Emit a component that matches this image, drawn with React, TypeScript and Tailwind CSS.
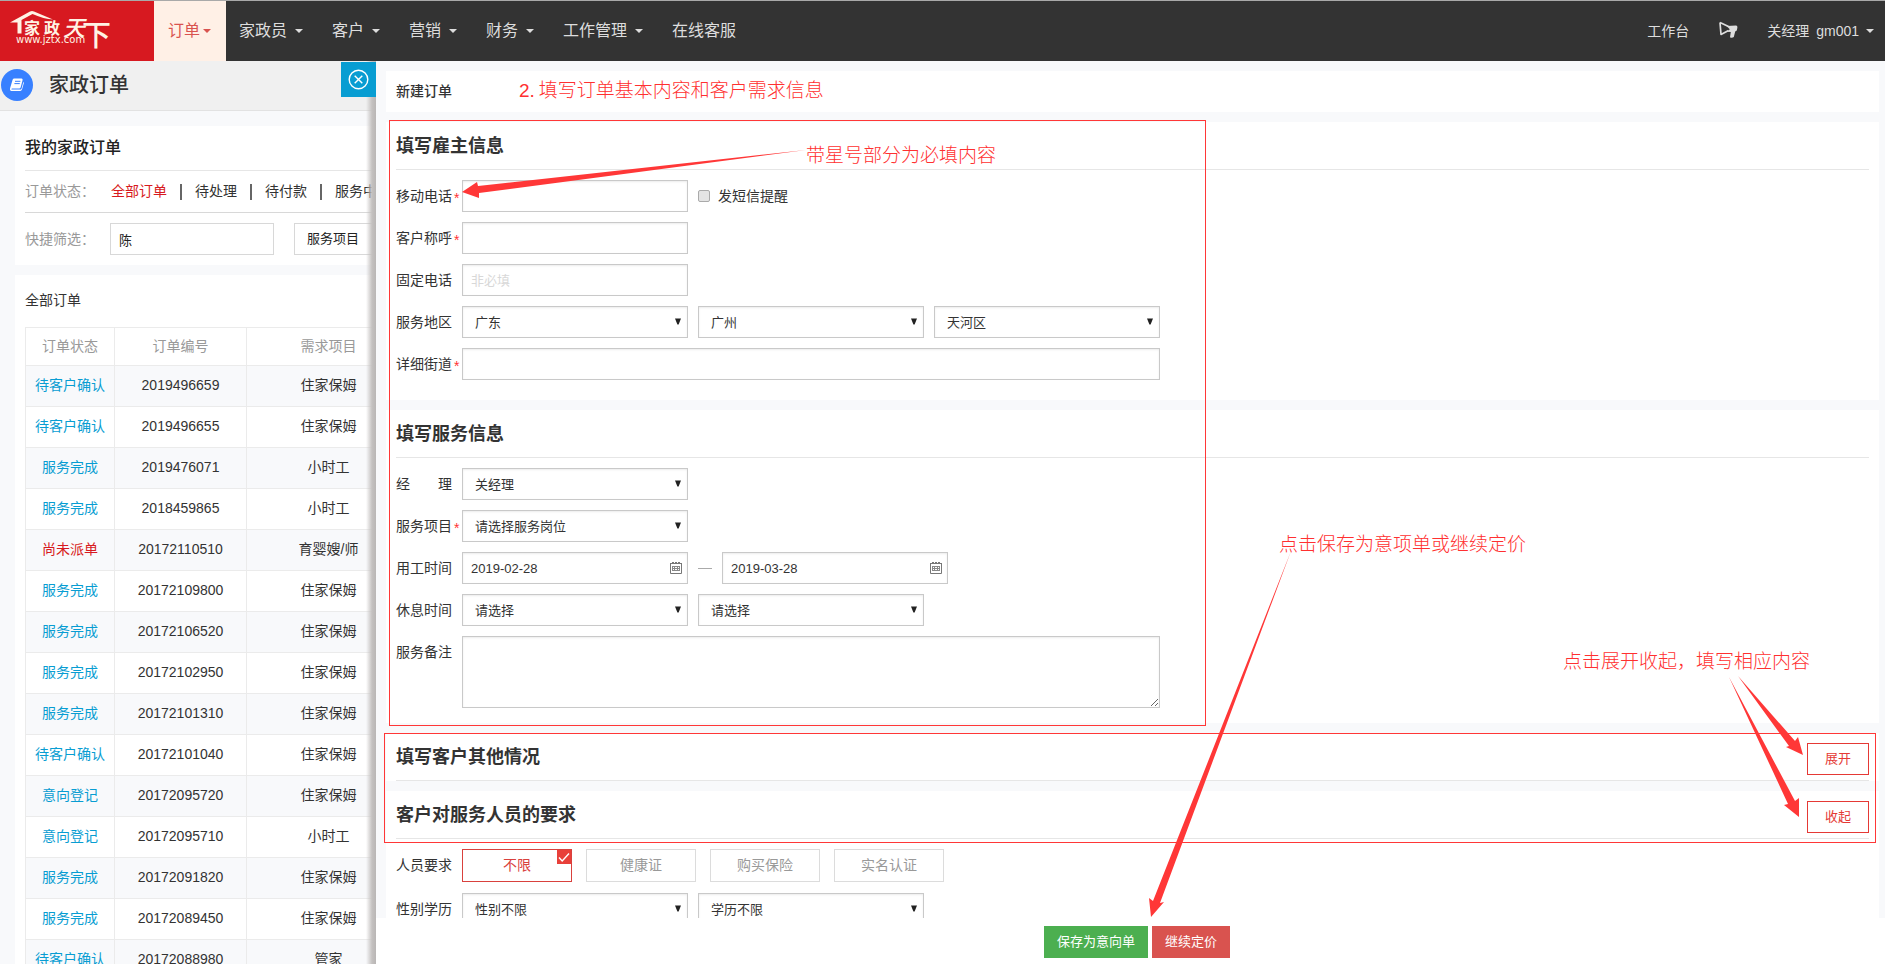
import type { ReactNode } from 'react';

const fieldBase =
  'border border-[#c9c9c9] bg-white text-[13px] text-[#333] shadow-[inset_0_1px_2px_rgba(0,0,0,0.08)] outline-none';

function Caret({ className = '' }: { className?: string }) {
  return (
    <svg className={className} width="8" height="4" viewBox="0 0 8 4" fill="currentColor" aria-hidden="true">
      <path d="M0 0h8L4 4z" />
    </svg>
  );
}

function Logo() {
  return (
    <a href="#home" aria-label="家政天下" className="block h-full w-[154px] shrink-0 bg-[#d71920]">
      <svg width="120" height="60" viewBox="0 0 120 60" fill="#fff3e4" fontFamily='"Noto Sans CJK SC", sans-serif'>
        <path d="M10 21.5 L30 10.5 Q32 9.6 34 10.5 L53 18.5 Q44 18 32.5 13 L21.5 19 L21.5 32.5 L17.5 32.5 L17.5 21.5 Z" />
        <text x="24" y="33" fontSize="16" fontWeight="700">家</text>
        <text x="44" y="33" fontSize="16" fontWeight="700">政</text>
        <text x="63" y="35" fontSize="22" fontWeight="500" fontStyle="italic">天</text>
        <text x="82" y="45" fontSize="29" fontWeight="500">下</text>
        <text x="16" y="42" fontSize="10" fontFamily='"DejaVu Sans", sans-serif'>www.jztx.com</text>
      </svg>
    </a>
  );
}

const navItems = [
  { label: '家政员', menu: true },
  { label: '客户', menu: true },
  { label: '营销', menu: true },
  { label: '财务', menu: true },
  { label: '工作管理', menu: true },
  { label: '在线客服', menu: false },
];

function TopBar() {
  return (
    <header className="relative z-30 flex h-[61px] shrink-0 border-t border-[#a9a9a9] bg-[#333] text-[#ddd]">
      <Logo />
      <nav className="flex text-[16px] whitespace-nowrap">
        <a href="#orders" className="flex w-[72px] items-center gap-[3px] bg-[#fff0e6] pl-[14px] text-[#d9534f]">
          订单
          <Caret />
        </a>
        {navItems.map((item) => (
          <a key={item.label} href={`#${item.label}`} className="flex items-center gap-2 pr-4 pl-[13px]">
            {item.label}
            {item.menu && <Caret />}
          </a>
        ))}
      </nav>
      <div className="ml-auto flex items-center pr-[11px] text-[14px] whitespace-nowrap">
        <a href="#workbench">工作台</a>
        <button type="button" aria-label="公告" className="mx-[29px] block pb-[2px]">
          <svg width="20" height="18" viewBox="0 0 20 18" aria-hidden="true">
            <path d="M2 1.5 L3 13.5 L10.5 9.5 M2 1.5 L10.5 5.5" fill="none" stroke="#ddd" strokeWidth="1.7" strokeLinejoin="round" />
            <path
              d="M8.5 5 L18 4.6 Q19.6 4.6 19.4 6.6 L18.8 9.4 L17.2 10.4 L15.8 16 Q14 17.3 12 16.2 L12.8 11 L9 10.8 L11.8 8.2 Z"
              fill="#ddd"
            />
          </svg>
        </button>
        <button type="button" className="flex items-center gap-[7px]">
          <span>关经理</span>
          <span>gm001</span>
          <Caret />
        </button>
      </div>
    </header>
  );
}

const orders: [string, string, string][] = [
  ['待客户确认', '2019496659', '住家保姆'],
  ['待客户确认', '2019496655', '住家保姆'],
  ['服务完成', '2019476071', '小时工'],
  ['服务完成', '2018459865', '小时工'],
  ['尚未派单', '20172110510', '育婴嫂/师'],
  ['服务完成', '20172109800', '住家保姆'],
  ['服务完成', '20172106520', '住家保姆'],
  ['服务完成', '20172102950', '住家保姆'],
  ['服务完成', '20172101310', '住家保姆'],
  ['待客户确认', '20172101040', '住家保姆'],
  ['意向登记', '20172095720', '住家保姆'],
  ['意向登记', '20172095710', '小时工'],
  ['服务完成', '20172091820', '住家保姆'],
  ['服务完成', '20172089450', '住家保姆'],
  ['待客户确认', '20172088980', '管家'],
];

function StatusDivider() {
  return <span className="h-4 w-[2px] bg-[#666]" />;
}

function OrdersPane() {
  return (
    <section className="relative w-[376px] shrink-0 overflow-hidden bg-[#f8f9fb]">
      <div className="flex h-[50px] items-center border-b border-[#e2e2e2] bg-[#f0f0f0] pb-px pl-px">
        <span className="flex size-8 items-center justify-center rounded-full bg-[#3880ff]">
          <svg width="16" height="14" viewBox="0 0 16 14" aria-hidden="true">
            <path
              d="M5.2 0.5 H12.6 Q13.9 0.6 13.6 2 L11.6 9.4 Q11.3 10.4 10.2 10.4 H3 Q2 10.8 2.6 11.6 H11.2 Q12.2 11.6 12.6 10.4 L14.4 3.8 Q15 4.4 14.8 5.2 L13 11.6 Q12.5 13 11.2 13 H2.4 Q0.4 12.7 1 10.4 L3.6 1.8 Q4.1 0.6 5.2 0.5 Z"
              fill="#fff"
            />
            <path d="M6 3.3 H11.4 M5.4 5.6 H10.8" stroke="#3880ff" strokeWidth="1" />
          </svg>
        </span>
        <h1 className="ml-4 text-[20px] leading-[28px] font-medium text-[#333]">家政订单</h1>
      </div>
      <div className="min-w-[480px] pt-[15px] pl-[15px]">
        <div className="bg-white pl-[10px]">
          <h2 className="flex h-[45px] items-center border-b border-[#e6e6e6] text-[16px] font-medium text-[#222]">
            我的家政订单
          </h2>
          <div className="flex h-[42px] items-center border-b border-[#d8d8d8] text-[14px] whitespace-nowrap text-[#333]">
            <span className="w-[86px] text-[#999]">订单状态：</span>
            <div className="flex items-center gap-[13px]">
              <a href="#all" className="text-[#d71920]">全部订单</a>
              <StatusDivider />
              <a href="#pending">待处理</a>
              <StatusDivider />
              <a href="#unpaid">待付款</a>
              <StatusDivider />
              <a href="#serving">服务中</a>
            </div>
          </div>
          <div className="flex items-center py-[10px]">
            <label htmlFor="quick" className="w-[85px] text-[14px] text-[#999]">快捷筛选：</label>
            <input id="quick" defaultValue="陈" className="h-8 w-[164px] border border-[#d8d8d8] bg-white px-2 text-[13px] text-[#222] outline-none" />
            <button type="button" className="ml-5 h-8 w-[120px] border border-[#d8d8d8] bg-white pl-3 text-left text-[13px] text-[#222]">
              服务项目
            </button>
          </div>
        </div>
        <div className="mt-[10px] bg-white pl-[10px]">
          <h3 className="flex h-[52px] items-center pb-[2px] text-[14px] text-[#333]">全部订单</h3>
          <table className="w-[385px] table-fixed border-collapse text-center text-[14px] text-[#333]">
            <colgroup>
              <col className="w-[89px]" />
              <col className="w-[132px]" />
              <col className="w-[164px]" />
            </colgroup>
            <thead>
              <tr className="h-[38px] text-[#999]">
                {['订单状态', '订单编号', '需求项目'].map((heading) => (
                  <th key={heading} scope="col" className="border border-[#ebebeb] font-normal">{heading}</th>
                ))}
              </tr>
            </thead>
            <tbody>
              {orders.map(([status, id, service]) => (
                <tr key={id} className="h-[41px] odd:bg-[#f8f9fb]">
                  <td className="border border-[#ebebeb] pb-[2px]">
                    <a href={`#${id}`} className={status === '尚未派单' ? 'text-[#d71920]' : 'text-[#089dd2]'}>{status}</a>
                  </td>
                  <td className="border border-[#ebebeb] pb-[2px]">{id}</td>
                  <td className="border border-[#ebebeb] pb-[2px]">{service}</td>
                </tr>
              ))}
            </tbody>
          </table>
        </div>
      </div>
      <div className="pointer-events-none absolute inset-y-0 right-0 w-[10px] bg-linear-to-r from-transparent via-[#c4c1c0] via-60% to-[#b9b6b5]" />
    </section>
  );
}

function FormRow({ label, htmlFor, required, children }: { label: string; htmlFor: string; required?: boolean; children: ReactNode }) {
  return (
    <div className="flex items-start">
      <label htmlFor={htmlFor} className="flex h-8 w-[66px] shrink-0 items-center text-[14px] whitespace-pre text-[#333]">
        {label}
        {required && <span className="pt-1 pl-[2px] text-[#f33]">*</span>}
      </label>
      <div className="flex items-center gap-[10px]">{children}</div>
    </div>
  );
}

function SelectBox({ id, value, label }: { id: string; value: string; label: string }) {
  return (
    <div className="relative w-[226px]">
      <select id={id} aria-label={label} defaultValue={value} className={`${fieldBase} block h-8 w-full appearance-none pt-[2px] pl-3`}>
        <option>{value}</option>
      </select>
      <svg className="pointer-events-none absolute top-3 right-[7px]" width="6" height="7" viewBox="0 0 6 7" aria-hidden="true">
        <path d="M0 0.5h6L3.6 6.5H2.4z" fill="#222" />
      </svg>
    </div>
  );
}

function DateBox({ id, value, label }: { id: string; value: string; label: string }) {
  return (
    <div className="relative w-[226px]">
      <input id={id} aria-label={label} defaultValue={value} className={`${fieldBase} block h-8 w-full px-2`} />
      <svg className="pointer-events-none absolute top-[10px] right-[6px]" width="12" height="12" viewBox="0 0 12 12" aria-hidden="true">
        <path d="M0.5 1V11.5H11.5V1M2 0.5H4M5 0.5H7M8 0.5H10M1 1.5H11" fill="none" stroke="#777" />
        <path d="M2 4.5H10M2 6.5H10M2 8.5H10M2.5 4V9M4.5 4V9M7.5 4V9M9.5 4V9" stroke="#888" fill="none" />
      </svg>
    </div>
  );
}

function FormCard({ title, action, children, className = '' }: { title: string; action?: string; children?: ReactNode; className?: string }) {
  return (
    <section className={`mt-[10px] bg-white px-[10px] ${className}`}>
      <div className="flex h-12 items-center justify-between border-b border-[#e6e6e6]">
        <h3 className="pt-px text-[18px] font-bold text-[#333]">{title}</h3>
        {action && (
          <button type="button" className="mb-[5px] h-8 w-[62px] self-end border border-[#e53935] bg-white text-[13px] text-[#e53935]">
            {action}
          </button>
        )}
      </div>
      {children && <div className="flex flex-col gap-[10px] pt-[10px]">{children}</div>}
    </section>
  );
}

function Requirement({ label, selected }: { label: string; selected?: boolean }) {
  return (
    <button
      type="button"
      aria-pressed={!!selected}
      className={`relative h-[33px] w-[110px] border bg-white text-[14px] ${selected ? 'border-[#d9413d] text-[#d9413d]' : 'border-[#dcdcdc] text-[#999]'}`}
    >
      {label}
      {selected && (
        <svg className="absolute top-0 right-0" width="14" height="14" viewBox="0 0 14 14" aria-hidden="true">
          <path d="M0 0h14v14H0z" fill="#e8403a" />
          <path d="M2 7.5 5.2 11 12 3.5" fill="none" stroke="#fff" strokeWidth="1.4" />
        </svg>
      )}
    </button>
  );
}

function OrderDrawer() {
  return (
    <main className="relative z-10 flex min-w-0 flex-1 flex-col bg-white">
      <button type="button" aria-label="关闭" className="absolute top-px -left-[35px] flex size-[35px] items-center justify-center bg-[#089dd2]">
        <svg width="21" height="21" viewBox="0 0 21 21" fill="none" stroke="#fff" strokeWidth="1.4" aria-hidden="true">
          <circle cx="10.5" cy="10.5" r="9.3" />
          <path d="M6.7 6.7l7.6 7.6M14.3 6.7l-7.6 7.6" />
        </svg>
      </button>
      <div className="min-h-0 flex-1 overflow-hidden bg-[#f8f9fb] pt-[10px] pr-[6px] pl-[10px]">
        <h2 className="flex h-[41px] items-center bg-white pl-[10px] text-[14px] font-medium text-[#333]">新建订单</h2>
        <FormCard title="填写雇主信息" className="pb-5">
          <FormRow label="移动电话" htmlFor="mobile" required>
            <input id="mobile" className={`${fieldBase} h-8 w-[226px] px-2`} />
            <label className="flex items-center gap-2 text-[14px] text-[#333]">
              <input type="checkbox" className="size-3 appearance-none rounded-[2px] border border-[#aaa] bg-[#e4e4e4]" />
              发短信提醒
            </label>
          </FormRow>
          <FormRow label="客户称呼" htmlFor="customer" required>
            <input id="customer" className={`${fieldBase} h-8 w-[226px] px-2`} />
          </FormRow>
          <FormRow label="固定电话" htmlFor="phone">
            <input id="phone" placeholder="非必填" className={`${fieldBase} h-8 w-[226px] px-2 placeholder:text-[#d8d8d8]`} />
          </FormRow>
          <FormRow label="服务地区" htmlFor="province">
            <SelectBox id="province" label="省份" value="广东" />
            <SelectBox id="city" label="城市" value="广州" />
            <SelectBox id="district" label="区县" value="天河区" />
          </FormRow>
          <FormRow label="详细街道" htmlFor="street" required>
            <input id="street" className={`${fieldBase} h-8 w-[698px] px-2`} />
          </FormRow>
        </FormCard>
        <FormCard title="填写服务信息" className="pb-[15px]">
          <FormRow label="经　　理" htmlFor="manager">
            <SelectBox id="manager" label="经理" value="关经理" />
          </FormRow>
          <FormRow label="服务项目" htmlFor="service" required>
            <SelectBox id="service" label="服务项目" value="请选择服务岗位" />
          </FormRow>
          <FormRow label="用工时间" htmlFor="from">
            <DateBox id="from" label="开始日期" value="2019-02-28" />
            <span className="h-px w-[14px] bg-[#aaa]" />
            <DateBox id="to" label="结束日期" value="2019-03-28" />
          </FormRow>
          <FormRow label="休息时间" htmlFor="rest">
            <SelectBox id="rest" label="休息时间" value="请选择" />
            <SelectBox id="restDay" label="休息日" value="请选择" />
          </FormRow>
          <FormRow label="服务备注" htmlFor="remark">
            <textarea id="remark" className={`${fieldBase} block h-[72px] w-[698px] resize px-2 py-1`} />
          </FormRow>
        </FormCard>
        <FormCard title="填写客户其他情况" action="展开" />
        <FormCard title="客户对服务人员的要求" action="收起" className="pb-5">
          <FormRow label="人员要求" htmlFor="requirements">
            <div id="requirements" className="mb-px flex gap-[14px]">
              <Requirement label="不限" selected />
              <Requirement label="健康证" />
              <Requirement label="购买保险" />
              <Requirement label="实名认证" />
            </div>
          </FormRow>
          <FormRow label="性别学历" htmlFor="gender">
            <SelectBox id="gender" label="性别" value="性别不限" />
            <SelectBox id="degree" label="学历" value="学历不限" />
          </FormRow>
        </FormCard>
      </div>
      <footer className="flex h-[46px] shrink-0 items-start justify-center gap-1 bg-white pt-2 pl-[13px] text-[13px] text-white [text-shadow:0_-1px_0_rgba(0,0,0,0.25)]">
        <button type="button" className="h-8 bg-[#4caf50] px-[13px]">保存为意向单</button>
        <button type="button" className="h-8 bg-[#d9534f] px-[13px]">继续定价</button>
      </footer>
      <Annotations />
    </main>
  );
}

function Annotations() {
  return (
    <div className="pointer-events-none absolute inset-0 overflow-hidden text-[19px] leading-[24px] font-light whitespace-nowrap text-[#ff3030]">
      <div className="absolute top-[59px] left-[13px] h-[606px] w-[817px] border border-[#ff3737]" />
      <div className="absolute top-[672px] right-[9px] left-[8px] h-[110px] border border-[#ff3737]" />
      <p className="absolute top-[18px] left-[143px] flex gap-1">
        <span>2.</span>
        <span>填写订单基本内容和客户需求信息</span>
      </p>
      <p className="absolute top-[83px] left-[430px]">带星号部分为必填内容</p>
      <p className="absolute top-[472px] left-[903px]">点击保存为意项单或继续定价</p>
      <p className="absolute top-[589px] right-[75px]">点击展开收起，填写相应内容</p>
      <svg className="absolute top-[80px] left-[80px]" width="860" height="780" viewBox="80 80 860 780" fill="#ff3737" aria-hidden="true">
        <path d="M86 131 L101 121 L102 125 L430 89 L103 132 L103 137 Z" />
        <path d="M775 856 L773 837 L777 840 L915 490 L784 842 L788 841 Z" />
      </svg>
      <svg className="absolute top-[610px] right-[80px]" width="80" height="150" viewBox="0 0 80 150" fill="#ff3737" aria-hidden="true">
        <path d="M78 84 L73 66 L70 70 L13 5 L64 75 L61 76 Z" />
        <path d="M74 146 L74 127 L70 130 L4 6 L63 133 L59 134 Z" />
      </svg>
    </div>
  );
}

export default function App() {
  return (
    <div className="flex h-screen flex-col overflow-hidden bg-[#f8f9fb] font-['Liberation_Sans','Noto_Sans_CJK_SC',sans-serif]">
      <TopBar />
      <div className="flex min-h-0 flex-1">
        <OrdersPane />
        <OrderDrawer />
      </div>
    </div>
  );
}
